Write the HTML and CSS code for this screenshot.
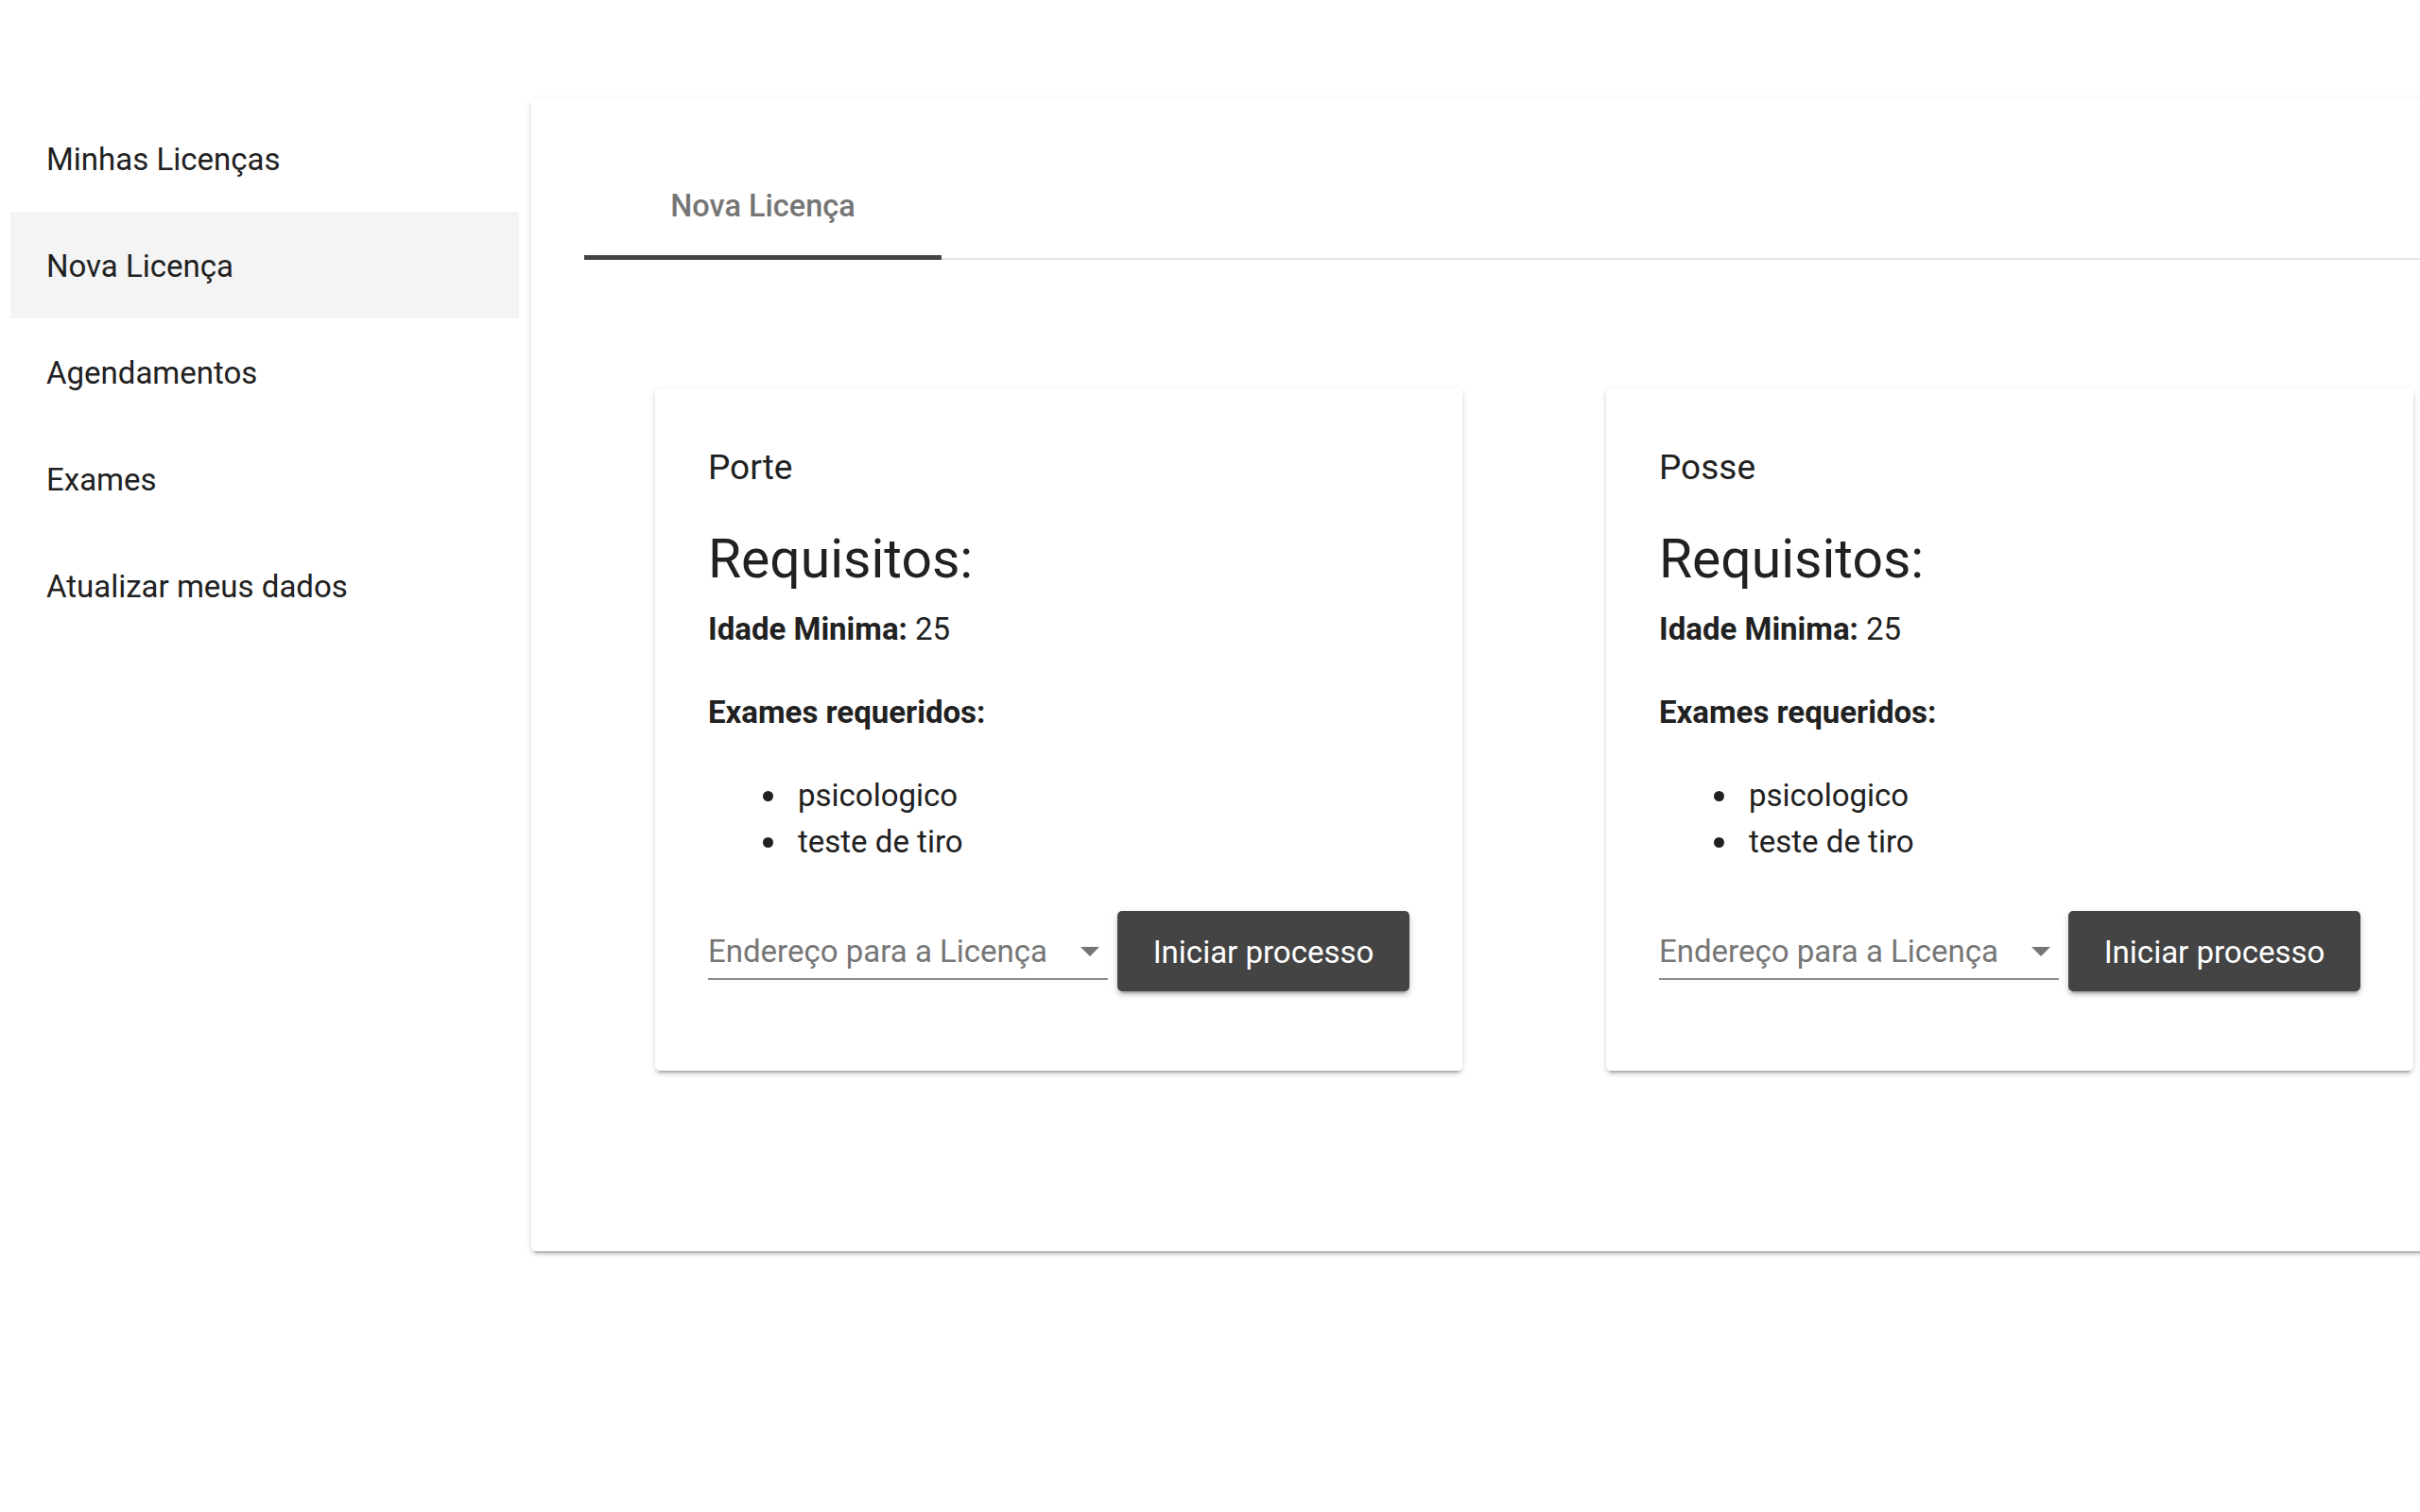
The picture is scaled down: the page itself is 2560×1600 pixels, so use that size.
FILE: index.html
```html
<!DOCTYPE html>
<html lang="pt-BR">
<head>
<meta charset="utf-8">
<title>Nova Licença</title>
<link rel="stylesheet" href="styles.css">
</head>
<body>
<div class="app">
  <nav class="sidebar">
    <div class="nav-item">Minhas Licenças</div>
    <div class="nav-item active">Nova Licença</div>
    <div class="nav-item">Agendamentos</div>
    <div class="nav-item">Exames</div>
    <div class="nav-item">Atualizar meus dados</div>
  </nav>
  <main class="panel">
    <div class="tabs">
      <div class="tab">Nova Licença</div>
    </div>
    <div class="cards">
      <section class="card">
        <div class="card-title">Porte</div>
        <h2 class="req">Requisitos:</h2>
        <p class="age"><strong>Idade Minima:</strong> 25</p>
        <p class="exams-label"><strong>Exames requeridos:</strong></p>
        <ul class="exams">
          <li>psicologico</li>
          <li>teste de tiro</li>
        </ul>
        <div class="actions">
          <div class="select">
            <span class="placeholder">Endereço para a Licença</span>
            <span class="arrow"></span>
          </div>
          <button class="btn">Iniciar processo</button>
        </div>
      </section>
      <section class="card">
        <div class="card-title">Posse</div>
        <h2 class="req">Requisitos:</h2>
        <p class="age"><strong>Idade Minima:</strong> 25</p>
        <p class="exams-label"><strong>Exames requeridos:</strong></p>
        <ul class="exams">
          <li>psicologico</li>
          <li>teste de tiro</li>
        </ul>
        <div class="actions">
          <div class="select">
            <span class="placeholder">Endereço para a Licença</span>
            <span class="arrow"></span>
          </div>
          <button class="btn">Iniciar processo</button>
        </div>
      </section>
    </div>
  </main>
</div>
</body>
</html>
```

FILE: styles.css
```css
html, body {
  margin: 0;
  padding: 0;
  overflow: hidden;
  background: #ffffff;
}

body {
  font-family: Roboto, "Noto Sans", "Liberation Sans", sans-serif;
  color: #212121;
  width: 2560px;
  height: 1600px;
}

.app {
  display: flex;
  align-items: flex-start;
  padding: 105px 0 0 11px;
  gap: 13px;
}

.sidebar {
  flex: 0 0 538px;
  margin-top: 6px;
}

.nav-item {
  height: 113px;
  display: flex;
  align-items: center;
  padding-left: 38px;
  padding-top: 2px;
  box-sizing: border-box;
  font-size: 33px;
  color: #212121;
}

.nav-item.active {
  background: #f4f4f4;
}

.panel {
  flex: 0 0 2200px;
  background: #fff;
  border-radius: 5px;
  box-shadow: 0 6px 2px -4px rgba(0,0,0,0.2), 0 4px 4px rgba(0,0,0,0.12), 0 1px 8px rgba(0,0,0,0.08);
  padding: 57px 0 191px 56px;
}

.tabs {
  display: flex;
  border-bottom: 2px solid #e3e3e3;
}

.tab {
  box-sizing: border-box;
  width: 378px;
  height: 113px;
  margin-bottom: -2px;
  padding-top: 3px;
  border-bottom: 5px solid #444444;
  display: flex;
  align-items: center;
  justify-content: center;
  font-size: 32.5px;
  font-weight: 500;
  color: #757575;
}

.cards {
  display: flex;
  gap: 152px;
  padding: 136px 0 0 75px;
}

.card {
  box-sizing: border-box;
  width: 854px;
  background: #fff;
  border-radius: 5px;
  box-shadow: 0 6px 2px -4px rgba(0,0,0,0.2), 0 4px 4px rgba(0,0,0,0.12), 0 1px 8px rgba(0,0,0,0.08);
  padding: 56px 56px 84px 56px;
}

.card-title {
  font-size: 37px;
  line-height: 55px;
}

.req {
  margin: 36px 0 0 0;
  font-size: 57px;
  font-weight: 400;
  line-height: 68px;
}

.age, .exams-label {
  margin: 0;
  font-size: 33px;
  line-height: 49.5px;
}

.age {
  margin-top: 15px;
}

.exams-label {
  margin-top: 38.5px;
}

.age strong, .exams-label strong {
  font-weight: 700;
}

.exams {
  margin: 38px 0 0 0;
  padding: 0;
  list-style: none;
  font-size: 33px;
  line-height: 49.5px;
}

.exams li {
  display: flex;
  align-items: center;
  padding-left: 58px;
}

.exams li::before {
  content: "";
  flex: 0 0 11px;
  width: 11px;
  height: 11px;
  border-radius: 50%;
  background: #212121;
  margin-right: 26px;
  margin-top: 2px;
}

.actions {
  display: flex;
  align-items: flex-start;
  gap: 10px;
  margin-top: 48.5px;
}

.select {
  box-sizing: border-box;
  width: 423px;
  height: 73px;
  padding: 18px 0 4px 0;
  border-bottom: 2px solid #8c8c8c;
  display: flex;
  align-items: center;
  justify-content: space-between;
}

.placeholder {
  font-size: 33px;
  line-height: 49px;
  color: #767676;
}

.arrow {
  width: 0;
  height: 0;
  border-left: 10px solid transparent;
  border-right: 10px solid transparent;
  border-top: 10px solid #757575;
  margin-right: 9px;
  margin-top: 1px;
}

.btn {
  box-sizing: border-box;
  width: 309px;
  height: 85px;
  border: none;
  border-radius: 5px;
  background: #444444;
  color: #ffffff;
  font-family: Roboto, "Noto Sans", "Liberation Sans", sans-serif;
  font-size: 33px;
  font-weight: 400;
  padding: 2px 0 0 0;
  box-shadow: 0 6px 2px -4px rgba(0,0,0,0.2), 0 4px 4px rgba(0,0,0,0.14), 0 2px 10px rgba(0,0,0,0.12);
}
```
